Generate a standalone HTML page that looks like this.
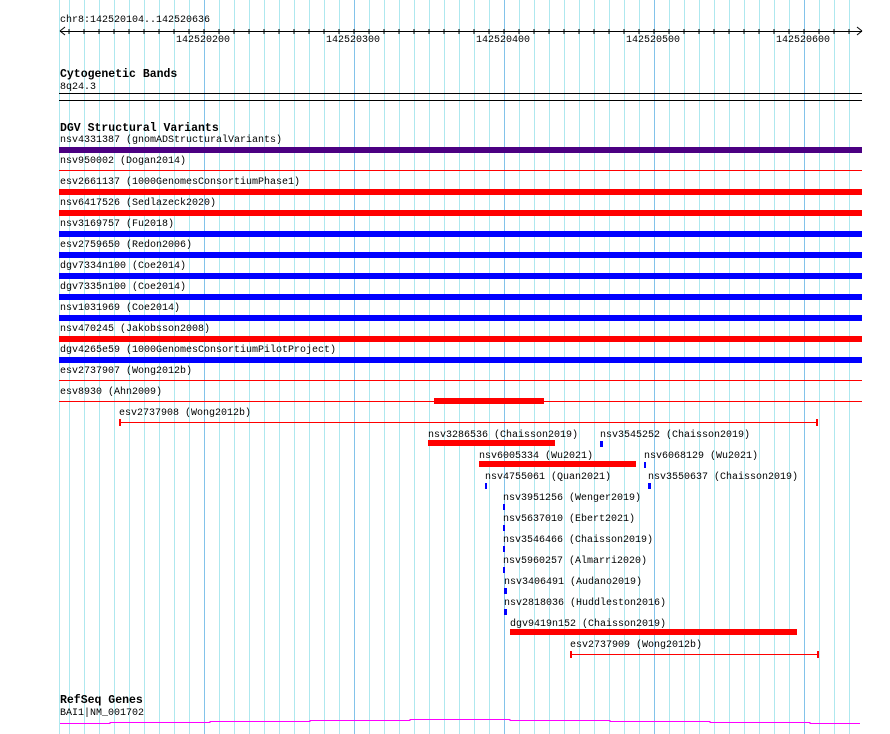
<!DOCTYPE html>
<html><head><meta charset="utf-8"><style>
*{margin:0;padding:0}
body{width:890px;height:734px;background:#fff;position:relative;overflow:hidden;font-family:"Liberation Mono","DejaVu Sans Mono",monospace;font-size:10px;color:#000}
.grid{position:absolute;left:69px;top:0;width:781px;height:734px;background:repeating-linear-gradient(90deg,#aee8ef 0 1px,transparent 1px 15px)}
.maj{position:absolute;top:0;width:1px;height:734px;background:#82c3ea}
.t{position:absolute;white-space:pre;line-height:11px}
.h{position:absolute;font-weight:bold;font-size:11.5px;white-space:pre;line-height:12px}
.b{position:absolute;height:6px}
.l{position:absolute;height:1px}
.R{background:#f00}.B{background:#00f}.P{background:#4b0082}.K{background:#000}
</style></head><body>
<div class="grid"></div>
<div class="maj" style="left:59px;background:#aee8ef"></div>
<div class="maj" style="left:204px"></div><div class="maj" style="left:354px"></div><div class="maj" style="left:504px"></div><div class="maj" style="left:654px"></div><div class="maj" style="left:804px"></div>

<div class="t" style="left:60px;top:15px">chr8:142520104..142520636</div>
<div class="l K" style="left:60px;top:31px;width:802px"></div>
<svg style="position:absolute;left:58px;top:26px" width="806" height="11">
<path d="M2 5 L7 1 M2 5 L7 9 M804 5 L799 1 M804 5 L799 9" stroke="#000" fill="none"/>
<path d="M11 3V8M26 3V8M41 3V8M56 3V8M71 3V8M86 3V8M101 3V8M116 3V8M131 3V8M146 3V8M161 3V8M176 3V8M191 3V8M206 3V8M221 3V8M236 3V8M251 3V8M266 3V8M281 3V8M296 3V8M311 3V8M326 3V8M341 3V8M356 3V8M371 3V8M386 3V8M401 3V8M416 3V8M431 3V8M446 3V8M461 3V8M476 3V8M491 3V8M506 3V8M521 3V8M536 3V8M551 3V8M566 3V8M581 3V8M596 3V8M611 3V8M626 3V8M641 3V8M656 3V8M671 3V8M686 3V8M701 3V8M716 3V8M731 3V8M746 3V8M761 3V8M776 3V8M791 3V8" stroke="#000" fill="none"/>
</svg>
<div class="t" style="left:176px;top:35px">142520200</div>
<div class="t" style="left:326px;top:35px">142520300</div>
<div class="t" style="left:476px;top:35px">142520400</div>
<div class="t" style="left:626px;top:35px">142520500</div>
<div class="t" style="left:776px;top:35px">142520600</div>

<div class="h" style="left:60px;top:69px">Cytogenetic Bands</div>
<div class="t" style="left:60px;top:82px">8q24.3</div>
<div class="l K" style="left:59px;top:93px;width:803px"></div>
<div class="l K" style="left:59px;top:100px;width:803px"></div>

<div class="h" style="left:60px;top:123px">DGV Structural Variants</div>
<div class="t" style="left:60px;top:135px">nsv4331387 (gnomADStructuralVariants)</div>
<div class="b P" style="left:59px;top:147px;width:803px"></div>
<div class="t" style="left:60px;top:156px">nsv950002 (Dogan2014)</div>
<div class="l R" style="left:59px;top:170px;width:803px"></div>
<div class="t" style="left:60px;top:177px">esv2661137 (1000GenomesConsortiumPhase1)</div>
<div class="b R" style="left:59px;top:189px;width:803px"></div>
<div class="t" style="left:60px;top:198px">nsv6417526 (Sedlazeck2020)</div>
<div class="b R" style="left:59px;top:210px;width:803px"></div>
<div class="t" style="left:60px;top:219px">nsv3169757 (Fu2018)</div>
<div class="b B" style="left:59px;top:231px;width:803px"></div>
<div class="t" style="left:60px;top:240px">esv2759650 (Redon2006)</div>
<div class="b B" style="left:59px;top:252px;width:803px"></div>
<div class="t" style="left:60px;top:261px">dgv7334n100 (Coe2014)</div>
<div class="b B" style="left:59px;top:273px;width:803px"></div>
<div class="t" style="left:60px;top:282px">dgv7335n100 (Coe2014)</div>
<div class="b B" style="left:59px;top:294px;width:803px"></div>
<div class="t" style="left:60px;top:303px">nsv1031969 (Coe2014)</div>
<div class="b B" style="left:59px;top:315px;width:803px"></div>
<div class="t" style="left:60px;top:324px">nsv470245 (Jakobsson2008)</div>
<div class="b R" style="left:59px;top:336px;width:803px"></div>
<div class="t" style="left:60px;top:345px">dgv4265e59 (1000GenomesConsortiumPilotProject)</div>
<div class="b B" style="left:59px;top:357px;width:803px"></div>
<div class="t" style="left:60px;top:366px">esv2737907 (Wong2012b)</div>
<div class="l R" style="left:59px;top:380px;width:803px"></div>
<div class="t" style="left:60px;top:387px">esv8930 (Ahn2009)</div>
<div class="l R" style="left:59px;top:401px;width:803px"></div>
<div class="b R" style="left:434px;top:398px;width:110px"></div>

<div class="t" style="left:119px;top:408px">esv2737908 (Wong2012b)</div>
<div class="l R" style="left:119px;top:422px;width:699px"></div>
<div class="R" style="position:absolute;left:119px;top:419px;width:2px;height:7px"></div>
<div class="R" style="position:absolute;left:816px;top:419px;width:2px;height:7px"></div>

<div class="t" style="left:428px;top:430px">nsv3286536 (Chaisson2019)</div>
<div class="b R" style="left:428px;top:440px;width:127px"></div>
<div class="t" style="left:600px;top:430px">nsv3545252 (Chaisson2019)</div>
<div class="b B" style="left:600px;top:441px;width:3px"></div>
<div class="t" style="left:479px;top:451px">nsv6005334 (Wu2021)</div>
<div class="b R" style="left:479px;top:461px;width:157px"></div>
<div class="t" style="left:644px;top:451px">nsv6068129 (Wu2021)</div>
<div class="b B" style="left:644px;top:462px;width:2px"></div>
<div class="t" style="left:485px;top:472px">nsv4755061 (Quan2021)</div>
<div class="b B" style="left:485px;top:483px;width:2px"></div>
<div class="t" style="left:648px;top:472px">nsv3550637 (Chaisson2019)</div>
<div class="b B" style="left:648px;top:483px;width:3px"></div>
<div class="t" style="left:503px;top:493px">nsv3951256 (Wenger2019)</div>
<div class="b B" style="left:503px;top:504px;width:2px"></div>
<div class="t" style="left:503px;top:514px">nsv5637010 (Ebert2021)</div>
<div class="b B" style="left:503px;top:525px;width:2px"></div>
<div class="t" style="left:503px;top:535px">nsv3546466 (Chaisson2019)</div>
<div class="b B" style="left:503px;top:546px;width:2px"></div>
<div class="t" style="left:503px;top:556px">nsv5960257 (Almarri2020)</div>
<div class="b B" style="left:503px;top:567px;width:2px"></div>
<div class="t" style="left:504px;top:577px">nsv3406491 (Audano2019)</div>
<div class="b B" style="left:504px;top:588px;width:3px"></div>
<div class="t" style="left:504px;top:598px">nsv2818036 (Huddleston2016)</div>
<div class="b B" style="left:504px;top:609px;width:3px"></div>
<div class="t" style="left:510px;top:619px">dgv9419n152 (Chaisson2019)</div>
<div class="b R" style="left:510px;top:629px;width:287px"></div>
<div class="t" style="left:570px;top:640px">esv2737909 (Wong2012b)</div>
<div class="l R" style="left:570px;top:654px;width:249px"></div>
<div class="R" style="position:absolute;left:570px;top:651px;width:2px;height:7px"></div>
<div class="R" style="position:absolute;left:817px;top:651px;width:2px;height:7px"></div>

<div class="h" style="left:60px;top:695px">RefSeq Genes</div>
<div class="t" style="left:60px;top:708px">BAI1|NM_001702</div>
<svg style="position:absolute;left:0;top:712px" width="890" height="14">
<path d="M60 11.5H110V10.5H210V9.5H310V8.5H410V7.5H510V8.5H610V9.5H710V10.5H810V11.5H860" stroke="#f0f" stroke-width="1" fill="none"/>
</svg>
</body></html>
